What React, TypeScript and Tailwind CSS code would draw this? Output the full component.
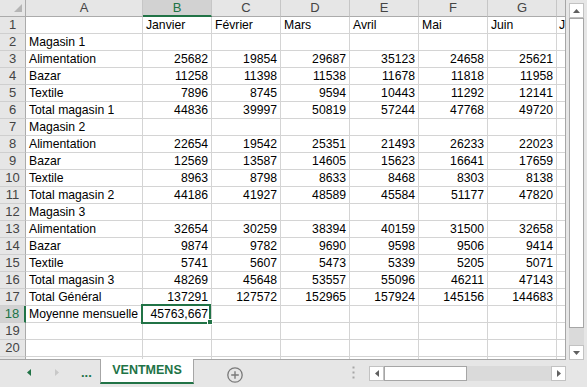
import { Fragment } from "react";

const data: string[][] = [
  ["", "Janvier", "Février", "Mars", "Avril", "Mai", "Juin", "Juillet"],
  ["Magasin 1"],
  ["Alimentation", "25682", "19854", "29687", "35123", "24658", "25621"],
  ["Bazar", "11258", "11398", "11538", "11678", "11818", "11958"],
  ["Textile", "7896", "8745", "9594", "10443", "11292", "12141"],
  ["Total magasin 1", "44836", "39997", "50819", "57244", "47768", "49720"],
  ["Magasin 2"],
  ["Alimentation", "22654", "19542", "25351", "21493", "26233", "22023"],
  ["Bazar", "12569", "13587", "14605", "15623", "16641", "17659"],
  ["Textile", "8963", "8798", "8633", "8468", "8303", "8138"],
  ["Total magasin 2", "44186", "41927", "48589", "45584", "51177", "47820"],
  ["Magasin 3"],
  ["Alimentation", "32654", "30259", "38394", "40159", "31500", "32658"],
  ["Bazar", "9874", "9782", "9690", "9598", "9506", "9414"],
  ["Textile", "5741", "5607", "5473", "5339", "5205", "5071"],
  ["Total magasin 3", "48269", "45648", "53557", "55096", "46211", "47143"],
  ["Total Général", "137291", "127572", "152965", "157924", "145156", "144683"],
  ["Moyenne mensuelle", "45763,667"],
  [],
  [],
  [],
];

const letters = ["A", "B", "C", "D", "E", "F", "G", ""];

const isNum = (v: string) => /^[\d,]+$/.test(v);

function Arrow({ dir, color = "#606060" }: { dir: "up" | "down" | "left" | "right"; color?: string }) {
  if (dir === "up" || dir === "down") {
    return (
      <svg width="7" height="4" viewBox="0 0 7 4">
        <path d={dir === "up" ? "M0 4 L3.5 0 L7 4Z" : "M0 0 L3.5 4 L7 0Z"} fill={color} />
      </svg>
    );
  }
  return (
    <svg width="4" height="7" viewBox="0 0 4 7">
      <path d={dir === "left" ? "M4 0 L0 3.5 L4 7Z" : "M0 0 L4 3.5 L0 7Z"} fill={color} />
    </svg>
  );
}

function Sheet() {
  return (
    <div className="w-[566px] h-[360px] overflow-hidden bg-white border-r border-b border-[#a6a6a6]">
      <div className="grid grid-cols-[26px_117px_69px_69px_69px_69px_69px_69px_8px] auto-rows-[17px]">
        {/* corner */}
        <div className="relative bg-[#e6e6e6] border-r border-b border-[#ababab]">
          <svg className="absolute right-[3px] bottom-[4px]" width="8" height="8" viewBox="0 0 8 8">
            <path d="M8 0 L8 8 L0 8Z" fill="#b5b5b5" />
          </svg>
        </div>
        {letters.map((l, i) =>
          l === "B" ? (
            <div
              key={i}
              className="flex items-center justify-center bg-[#d2d2d2] border-r border-r-[#c6c6c6] border-b-2 border-b-[#217346] text-[#217346] text-[13px]"
            >
              {l}
            </div>
          ) : (
            <div
              key={i}
              className={`flex items-center justify-center bg-[#e6e6e6] border-b border-b-[#ababab] text-[#444] text-[13px] ${
                i < 7 ? "border-r border-r-[#c6c6c6]" : ""
              }`}
            >
              {l}
            </div>
          )
        )}

        {data.map((row, r) => (
          <Fragment key={r}>
            {r === 17 ? (
              <div className="flex items-center justify-center bg-[#d2d2d2] border-r-2 border-r-[#217346] border-b border-b-[#cfcfcf] text-[#217346] text-[13px]">
                {r + 1}
              </div>
            ) : (
              <div className="flex items-center justify-center bg-[#e6e6e6] border-r border-r-[#ababab] border-b border-b-[#cfcfcf] text-[#444] text-[13px]">
                {r + 1}
              </div>
            )}
            {Array.from({ length: 8 }).map((_, c) => {
              const v = row[c] ?? "";
              const right = isNum(v);
              const selected = r === 17 && c === 1;
              if (selected) {
                return (
                  <div
                    key={c}
                    className="relative border-r border-b border-[#d4d4d4] px-[3px] leading-[16px] whitespace-nowrap text-right text-black"
                  >
                    {v}
                    <div className="absolute -left-[2px] -top-[2px] w-[70px] h-[20px] border-2 border-[#217346] z-10" />
                    <div className="absolute left-[64px] top-[13px] w-[6px] h-[6px] bg-[#217346] border border-white z-20" />
                  </div>
                );
              }
              return (
                <div
                  key={c}
                  className={`border-b border-[#d4d4d4] leading-[16px] whitespace-nowrap overflow-hidden text-black ${
                    c < 7 ? "border-r px-[3px]" : "pl-[2px]"
                  } ${right ? "text-right" : "text-left"}`}
                >
                  {v}
                </div>
              );
            })}
          </Fragment>
        ))}
      </div>
    </div>
  );
}

function VScroll() {
  return (
    <div className="w-[21px] h-[360px] pl-[3px] pt-[3px] flex flex-col">
      <div className="w-[15px] h-[15px] bg-white border border-[#c2c2c2] flex items-center justify-center">
        <Arrow dir="up" />
      </div>
      <div className="w-[15px] h-[310px] bg-white border border-[#a6a6a6]" />
      <div className="w-[15px] h-[17px] bg-[#dadada]" />
      <div className="w-[15px] h-[15px] bg-white border border-[#c2c2c2] flex items-center justify-center">
        <Arrow dir="down" />
      </div>
    </div>
  );
}

function BottomBar() {
  return (
    <div className="flex items-start h-[27px]">
      <div className="w-[100px] h-[24px] flex items-center pl-[27px]">
        <Arrow dir="left" color="#217346" />
        <div className="ml-[24px]">
          <Arrow dir="right" color="#c8c8c8" />
        </div>
        <span className="ml-[22px] text-[#217346] font-bold text-[13px] leading-none">...</span>
      </div>
      <div className="-mt-px w-[94px] h-[25px] bg-white border-l border-r border-[#a6a6a6] border-b-2 border-b-[#217346] flex items-center justify-center">
        <span className="text-[#217346] font-bold text-[12.5px]">VENTMENS</span>
      </div>
      <svg className="ml-[33px] mt-[7px]" width="16" height="16" viewBox="0 0 16 16">
        <circle cx="8" cy="8" r="7.2" fill="none" stroke="#7a7a7a" strokeWidth="1.3" />
        <path d="M8 4.2 V11.8 M4.2 8 H11.8" stroke="#7a7a7a" strokeWidth="1.4" />
      </svg>
      <svg className="ml-[109px] mt-[6px]" width="3" height="13" viewBox="0 0 3 13">
        <rect x="0.5" y="0.5" width="2" height="2" fill="#a6a6a6" />
        <rect x="0.5" y="5.5" width="2" height="2" fill="#a6a6a6" />
        <rect x="0.5" y="10.5" width="2" height="2" fill="#a6a6a6" />
      </svg>
      <div className="ml-[14px] mt-[6px] w-[197px] h-[15px] flex">
        <div className="w-[15px] h-[15px] bg-white border border-[#c2c2c2] flex items-center justify-center">
          <Arrow dir="left" />
        </div>
        <div className="w-[83px] h-[15px] bg-white border border-[#a6a6a6]" />
        <div className="flex-1 h-[15px] bg-[#dadada]" />
        <div className="w-[15px] h-[15px] bg-white border border-[#c2c2c2] flex items-center justify-center">
          <Arrow dir="right" />
        </div>
      </div>
    </div>
  );
}

export default function App() {
  return (
    <div className="w-[587px] h-[387px] overflow-hidden bg-[#e6e6e6] flex flex-col font-['Liberation_Sans',Arial,sans-serif] text-[12.2px]">
      <div className="flex h-[360px]">
        <Sheet />
        <VScroll />
      </div>
      <BottomBar />
    </div>
  );
}
